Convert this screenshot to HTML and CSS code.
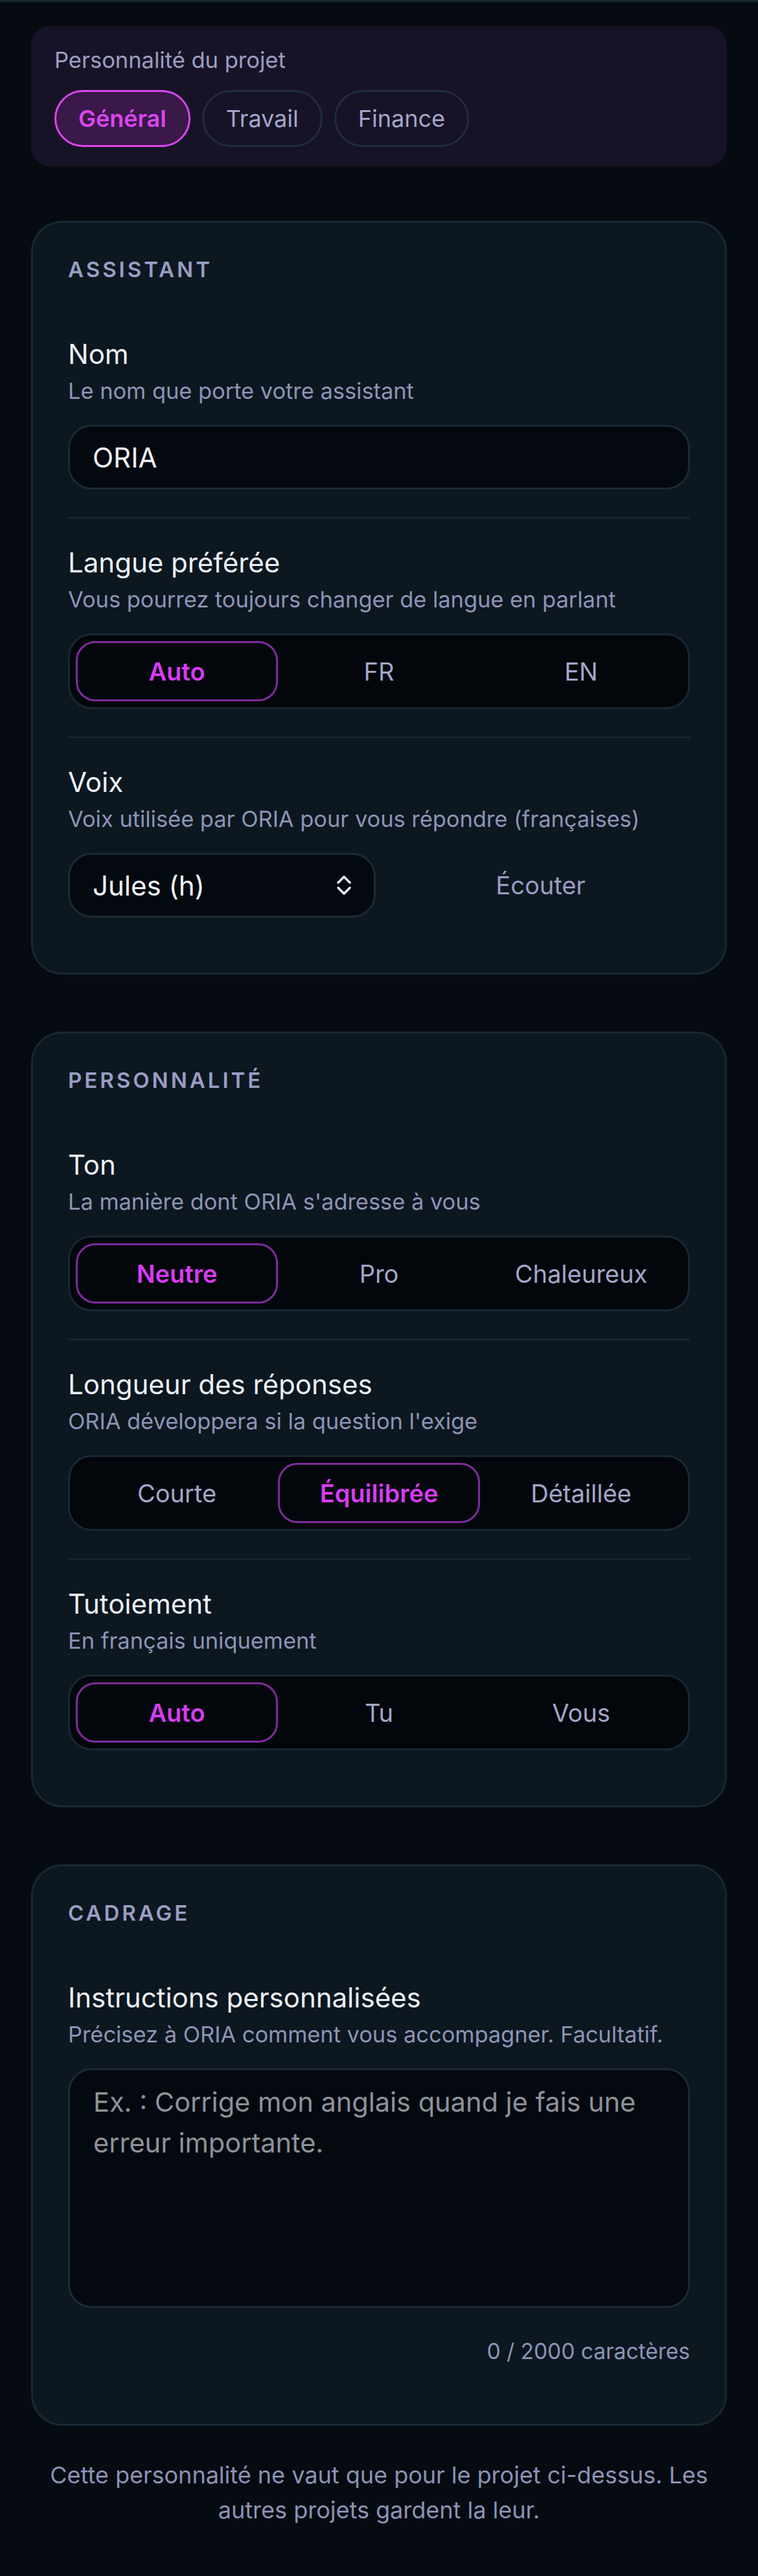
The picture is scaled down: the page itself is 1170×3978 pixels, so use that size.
FILE: index.html
```html
<!DOCTYPE html>
<html lang="fr">
<head>
<meta charset="utf-8">
<title>Personnalité du projet</title>
<link rel="stylesheet" href="styles.css">
</head>
<body>
<div class="topbar"></div>
<main class="page">
  <section class="project">
    <div class="project-label">Personnalité du projet</div>
    <div class="chips">
      <button class="chip chip-active">Général</button>
      <button class="chip">Travail</button>
      <button class="chip">Finance</button>
    </div>
  </section>

  <section class="card card-first">
    <h2 class="card-label">ASSISTANT</h2>
    <div class="field">
      <div class="field-title">Nom</div>
      <div class="field-sub">Le nom que porte votre assistant</div>
      <div class="input">ORIA</div>
    </div>
    <div class="field">
      <div class="field-title">Langue préférée</div>
      <div class="field-sub">Vous pourrez toujours changer de langue en parlant</div>
      <div class="segmented">
        <button class="seg seg-active">Auto</button>
        <button class="seg">FR</button>
        <button class="seg">EN</button>
      </div>
    </div>
    <div class="field">
      <div class="field-title">Voix</div>
      <div class="field-sub">Voix utilisée par ORIA pour vous répondre (françaises)</div>
      <div class="voice-row">
        <div class="input select">
          <span>Jules (h)</span>
          <svg class="chevrons" width="24" height="34" viewBox="0 0 24 34" aria-hidden="true">
            <path d="M3 13 L12 4 L21 13" fill="none" stroke="#e8eaf1" stroke-width="3.6" stroke-linecap="round" stroke-linejoin="round"/>
            <path d="M3 21 L12 30 L21 21" fill="none" stroke="#e8eaf1" stroke-width="3.6" stroke-linecap="round" stroke-linejoin="round"/>
          </svg>
        </div>
        <button class="listen">Écouter</button>
      </div>
    </div>
  </section>

  <section class="card">
    <h2 class="card-label">PERSONNALITÉ</h2>
    <div class="field">
      <div class="field-title">Ton</div>
      <div class="field-sub">La manière dont ORIA s'adresse à vous</div>
      <div class="segmented">
        <button class="seg seg-active">Neutre</button>
        <button class="seg">Pro</button>
        <button class="seg">Chaleureux</button>
      </div>
    </div>
    <div class="field">
      <div class="field-title">Longueur des réponses</div>
      <div class="field-sub">ORIA développera si la question l'exige</div>
      <div class="segmented">
        <button class="seg">Courte</button>
        <button class="seg seg-active">Équilibrée</button>
        <button class="seg">Détaillée</button>
      </div>
    </div>
    <div class="field">
      <div class="field-title">Tutoiement</div>
      <div class="field-sub">En français uniquement</div>
      <div class="segmented">
        <button class="seg seg-active">Auto</button>
        <button class="seg">Tu</button>
        <button class="seg">Vous</button>
      </div>
    </div>
  </section>

  <section class="card">
    <h2 class="card-label">CADRAGE</h2>
    <div class="field">
      <div class="field-title">Instructions personnalisées</div>
      <div class="field-sub">Précisez à ORIA comment vous accompagner. Facultatif.</div>
      <textarea class="textarea" placeholder="Ex. : Corrige mon anglais quand je fais une erreur importante."></textarea>
      <div class="counter">0 / 2000 caractères</div>
    </div>
  </section>

  <p class="footer-note">Cette personnalité ne vaut que pour le projet ci-dessus. Les autres projets gardent la leur.</p>
</main>
</body>
</html>
```

FILE: styles.css
```css
* {
  box-sizing: border-box;
}

html {
  background: #050b11;
}

body {
  margin: 0;
  background: #050b11;
  font-family: "Inter", "Noto Sans", sans-serif;
  color: #eef0f7;
  min-height: 3978px;
}

button,
textarea {
  font-family: inherit;
}

.topbar {
  height: 3px;
  background: #17242e;
}

.page {
  padding: 37px 48px 0;
}

/* Project selector */
.project {
  background: #171326;
  border-radius: 30px;
  padding: 30px 36px;
}

.project-label {
  font-size: 34.5px;
  line-height: 46px;
  color: #9c9ec2;
}

.chips {
  display: flex;
  gap: 18px;
  margin-top: 23px;
}

.chip {
  height: 88px;
  padding: 0 34px;
  border: 3px solid #1f2d37;
  border-radius: 44px;
  background: transparent;
  color: #a4a6c8;
  font-size: 36px;
  line-height: 1;
}

.chip-active {
  border-color: #d946ef;
  background: #3a1848;
  color: #d946ef;
  font-weight: 600;
}

/* Cards */
.card {
  margin-top: 88px;
  background: #0c1720;
  border: 3px solid #192833;
  border-radius: 48px;
  padding: 54px 54px 43px;
}

.card-first {
  margin-top: 84px;
}

.card-label {
  margin: 0 0 45px;
  font-size: 33px;
  line-height: 36px;
  font-weight: 600;
  letter-spacing: 4px;
  color: #9a9dc2;
}

.field {
  padding: 42px 0;
}

.field + .field {
  border-top: 3px solid #172530;
}

.field-title {
  font-size: 42px;
  line-height: 51px;
  color: #eef0f7;
}

.field-sub {
  margin-top: 9px;
  font-size: 34.4px;
  line-height: 45px;
  color: #8f93b5;
}

.input {
  margin-top: 30px;
  height: 100px;
  border: 3px solid #1b2a35;
  border-radius: 36px;
  background: #04090f;
  padding: 0 35px;
  display: flex;
  align-items: center;
  font-size: 42px;
  color: #f0f2f7;
}

.segmented {
  margin-top: 30px;
  height: 117px;
  border: 3px solid #182833;
  border-radius: 36px;
  background: #03070c;
  padding: 9px;
  display: grid;
  grid-template-columns: repeat(3, 1fr);
}

.seg {
  border: 3px solid transparent;
  border-radius: 30px;
  background: transparent;
  color: #a3a6c8;
  font-size: 38px;
  line-height: 1;
}

.seg-active {
  border-color: #7e2b9b;
  color: #d63cf0;
  font-weight: 600;
}

.voice-row {
  margin-top: 30px;
  display: grid;
  grid-template-columns: 475px 1fr;
  gap: 24px;
}

.voice-row .input {
  margin-top: 0;
}

.select {
  justify-content: space-between;
  padding-right: 34px;
}

.chevrons {
  display: block;
}

.listen {
  border: 0;
  background: transparent;
  color: #9a9dc0;
  font-size: 38px;
  line-height: 1;
}

.textarea {
  display: block;
  width: 100%;
  margin-top: 30px;
  height: 370px;
  border: 3px solid #1b2a35;
  border-radius: 36px;
  background: #04090f;
  padding: 18px 36px;
  font-size: 41.5px;
  line-height: 63px;
  color: #f0f2f7;
  resize: none;
  outline: none;
}

.textarea::placeholder {
  color: #8e9299;
  opacity: 1;
}

.counter {
  margin-top: 40px;
  text-align: right;
  font-size: 33.5px;
  line-height: 54px;
  color: #8f93b5;
}

.footer-note {
  margin: 49px 0 0;
  text-align: center;
  font-size: 36px;
  line-height: 54px;
  color: #8e92b5;
}
```
